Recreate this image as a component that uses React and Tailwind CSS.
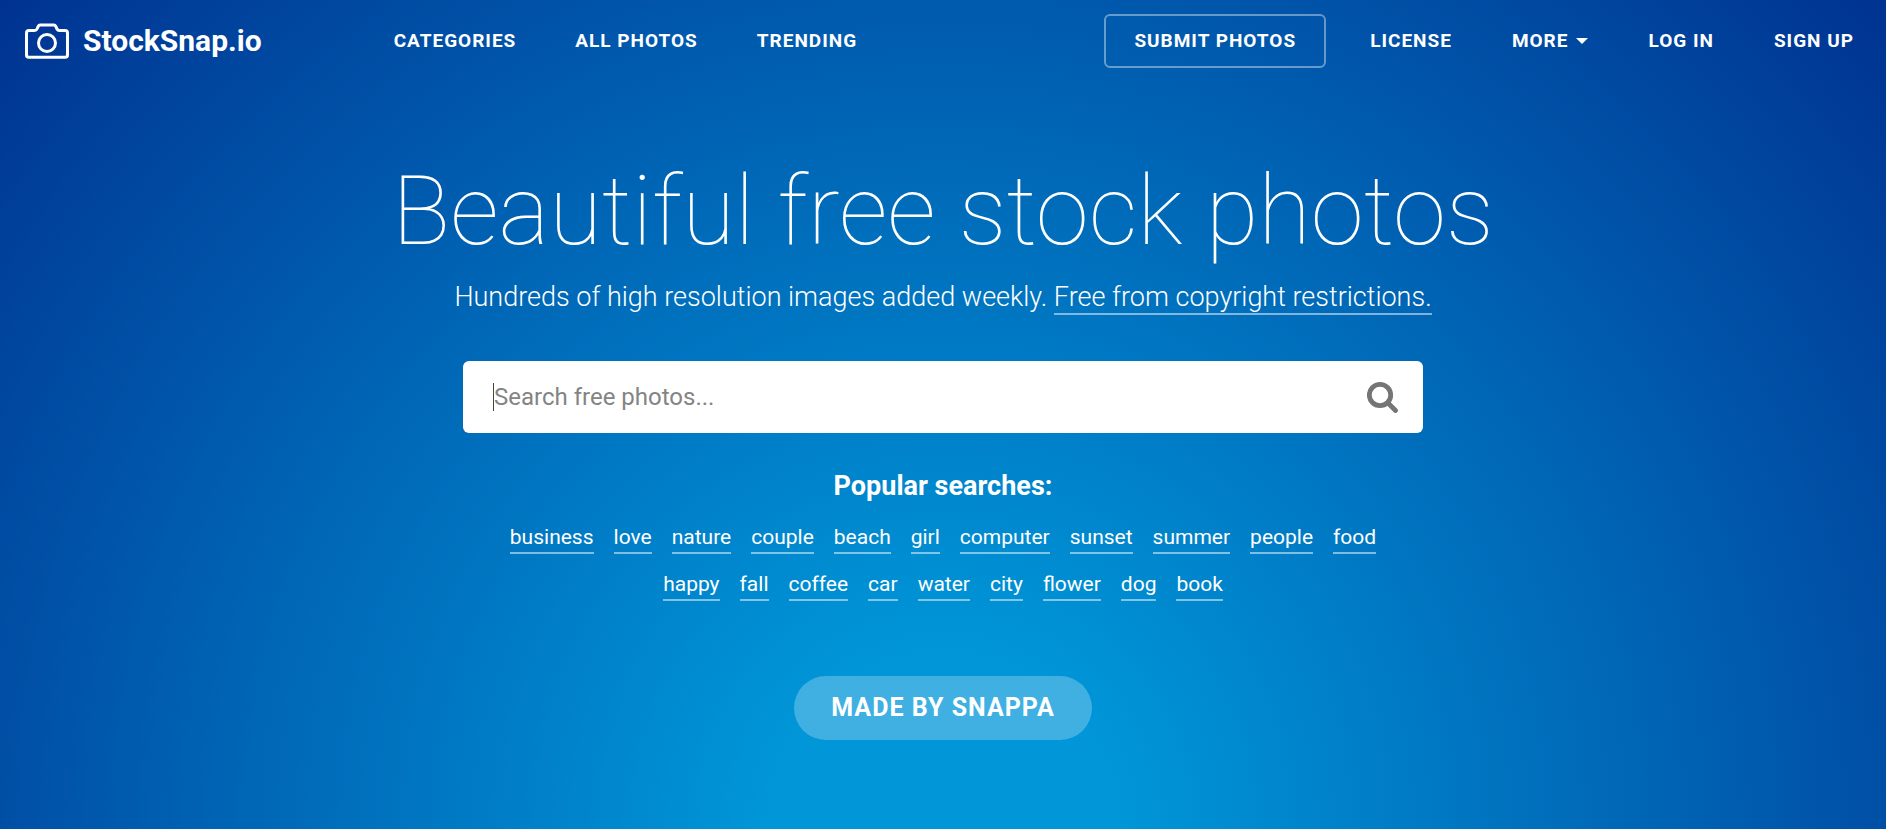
import * as React from "react";

const leftLinks = ["Categories", "All Photos", "Trending"];

const searches = [
  "business", "love", "nature", "couple", "beach", "girl", "computer", "sunset", "summer", "people",
  "food", "happy", "fall", "coffee", "car", "water", "city", "flower", "dog", "book",
];

function CameraIcon() {
  return (
    <svg width="44" height="36" viewBox="0 0 44 36" fill="none" stroke="currentColor" strokeWidth="3">
      <path d="M4 7.500h5.500c1.200 0 2-.4 2.500-1.500l1.200-2.600c.4-.9 1-1.400 2-1.400h13.600c1 0 1.600.5 2 1.400L32 6c.5 1.100 1.300 1.500 2.500 1.500H40c1.700 0 2.500.8 2.500 2.500v22c0 1.500-.8 2.300-2.300 2.300H3.800c-1.500 0-2.300-.8-2.300-2.300V10c0-1.700.8-2.500 2.500-2.500z" />
      <circle cx="22" cy="20" r="8.500" />
    </svg>
  );
}

function SearchIcon() {
  return (
    <svg width="32" height="32" viewBox="0 0 32 32" fill="none" stroke="currentColor" strokeLinecap="round">
      <circle cx="13" cy="14" r="10.700" strokeWidth="4.800" />
      <path d="M21 22l7.500 7.500" strokeWidth="4.800" />
    </svg>
  );
}

function NavLink({ children }) {
  return (
    <a href="#" className="flex items-center whitespace-nowrap uppercase">
      {children}
    </a>
  );
}

function App() {
  const [query, setQuery] = React.useState("");

  return (
    <div className="min-h-screen text-white font-['Roboto',sans-serif] bg-[radial-gradient(circle_at_bottom,#0096d8_14%,#003291)]">
      <nav className="flex h-[82px] items-center pl-[25px] pr-8 text-[19px] font-bold tracking-[1px]">
        <a href="#" className="flex items-center gap-[14px] text-3xl tracking-normal">
          <CameraIcon />
          StockSnap.io
        </a>
        <div className="ml-[132px] flex gap-[59px]">
          {leftLinks.map((link) => (
            <NavLink key={link}>{link}</NavLink>
          ))}
        </div>
        <div className="ml-auto flex items-center gap-[60px]">
          <button className="-mr-4 h-[54px] rounded-md border-2 border-white/40 px-7 uppercase tracking-[1px]">
            Submit Photos
          </button>
          <NavLink>License</NavLink>
          <NavLink>
            More
            <span className="ml-2 border-x-6 border-t-6 border-x-transparent border-t-white" />
          </NavLink>
          <NavLink>Log in</NavLink>
          <NavLink>Sign up</NavLink>
        </div>
      </nav>

      <main className="flex flex-col items-center pt-[73px] text-center">
        <h1 className="text-8xl leading-[112px] font-thin">Beautiful free stock photos</h1>
        <p className="mt-[14px] text-[27px] leading-8 font-light">
          Hundreds of high resolution images added weekly.{" "}
          <a href="#" className="border-b-2 border-white/50">Free from copyright restrictions.</a>
        </p>

        <form
          onSubmit={(e) => e.preventDefault()}
          className="mt-12 flex h-[72px] w-full max-w-[960px] items-center rounded-md bg-white pl-[30px] pr-6 text-[#757575]"
        >
          {/* Caret shown while the box is empty */}
          {!query && <span className="h-7 w-px bg-[#444444]" />}
          <input
            type="text"
            aria-label="Search free photos"
            placeholder="Search free photos..."
            value={query}
            onChange={(e) => setQuery(e.target.value)}
            className="grow text-2xl outline-none placeholder:text-[#848484]"
          />
          <button aria-label="Search">
            <SearchIcon />
          </button>
        </form>

        <h2 className="mt-[37px] text-[27px] leading-8 font-bold">Popular searches:</h2>
        <ul className="mt-[21px] flex w-full max-w-[900px] flex-wrap justify-center gap-x-5 gap-y-4 text-[21px] leading-7">
          {searches.map((word) => (
            <li key={word}>
              <a href="#" className="block border-b-2 border-white/50 pb-px">{word}</a>
            </li>
          ))}
        </ul>

        <a
          href="#"
          className="mt-[75px] flex h-16 items-center rounded-full bg-white/25 px-[37px] text-[25px] font-bold uppercase tracking-[1px]"
        >
          Made by Snappa
        </a>
      </main>
    </div>
  );
}

export default App;
